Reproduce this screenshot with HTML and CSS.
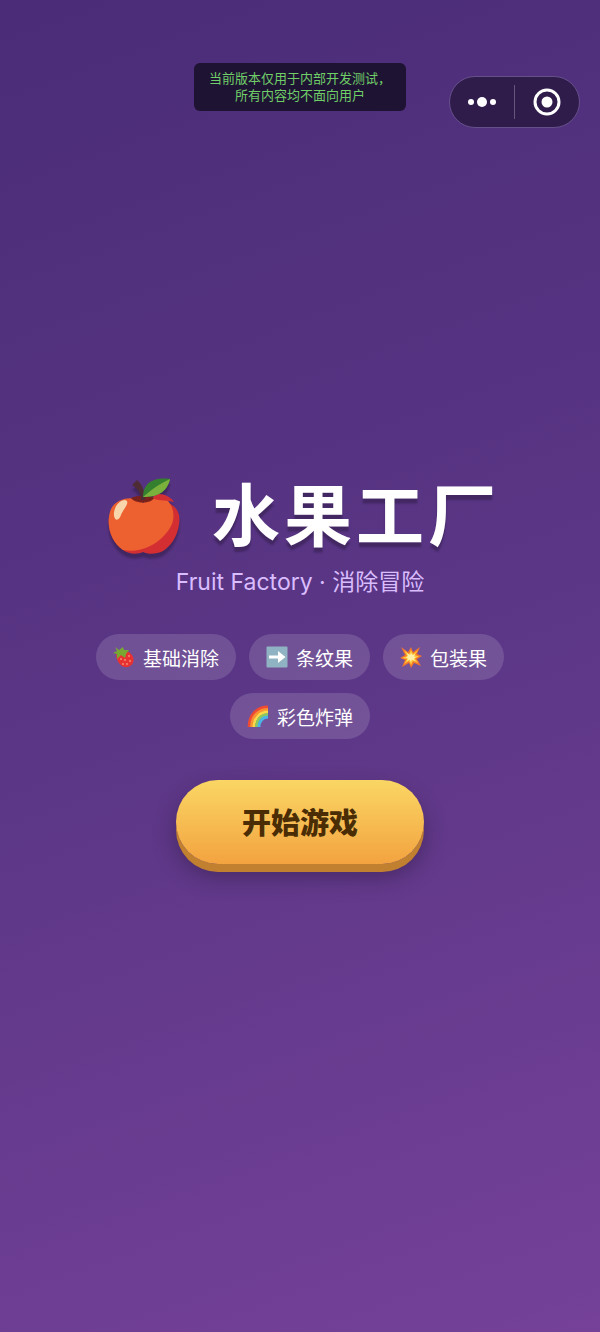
FILE: index.html
```html
<!DOCTYPE html>
<html lang="zh-CN">
	<head>
		<meta charset="utf-8">
		<meta name="viewport" content="width=device-width, initial-scale=1">
		<title>水果工厂</title>
		<link rel="stylesheet" href="styles.css">
	</head>
	<body>
		<!-- 测试版本提示 -->
		<div class="notice">当前版本仅用于内部开发测试，<br>所有内容均不面向用户</div>
		<!-- 右上角胶囊按钮 -->
		<div class="capsule">
			<button type="button" class="capsule-btn" aria-label="更多">
				<svg width="28" height="12" viewBox="0 0 28 12" fill="#fff">
					<circle cx="3" cy="6" r="3"/>
					<circle cx="14" cy="6" r="5"/>
					<circle cx="25" cy="6" r="3"/>
				</svg>
			</button>
			<span class="capsule-line"></span>
			<button type="button" class="capsule-btn" aria-label="关闭">
				<svg width="28" height="28" viewBox="0 0 28 28">
					<circle cx="14" cy="14" r="12" fill="none" stroke="#fff" stroke-width="3"/>
					<circle cx="14" cy="14" r="5.5" fill="#fff"/>
				</svg>
			</button>
		</div>
		<main class="home">
			<h1 class="home-title">
				<svg class="apple" width="72" height="78" viewBox="0 0 72 78">
					<path d="M35 29C29 20 10 20 3 33C-3 46 3 64 15 72C22 77 30 76 35 74C41 77 49 76 55 73C67 66 73 49 71 37C68 23 48 18 35 29Z" fill="#d32f32"/>
					<path d="M35 25C29 18 10 18 3 31C-3 46 3 64 15 72C33 76 54 65 63 48C68 38 65 27 58 21C49 16 41 20 35 25Z" fill="#ed6130"/>
					<path d="M45 17C53 14 62 18 66 24C60 22 52 23 46 21Z" fill="#d32f32"/>
					<path d="M23 20C29 17 42 17 46 20C43 26 27 26 23 20Z" fill="#7b211b"/>
					<path d="M24 7L29 2C34 6 37 13 37 22L33 22C33 15 30 11 24 7Z" fill="#4e2c35"/>
					<path d="M35 19C35 4 47-1 62 1C59 15 48 19 35 19Z" fill="#34802f"/>
					<path d="M35 19C43 12 51 6 62 1C59 15 48 19 35 19Z" fill="#79b13c"/>
					<path d="M6 38C5 30 11 22 17 22C23 24 16 30 13 37C11 43 7 43 6 38Z" fill="#f9d5ac"/>
				</svg>
				<span>水果工厂</span>
			</h1>
			<p class="home-sub">Fruit Factory · 消除冒险</p>
			<ul class="tags">
				<li class="tag">
					<svg width="22" height="22" viewBox="0 0 22 22">
						<path d="M3 9C6 5 14 3 18 8C23 13 20 20 15 21C10 22 4 18 3 9Z" fill="#e83232"/>
						<path d="M2 1L6 4L10 1L11 4L16 4L13 8L12 12L8 9L4 13L4 8L0 7L4 5Z" fill="#77a832"/>
						<g fill="#ffc19b">
							<circle cx="8" cy="13" r="0.8"/>
							<circle cx="12" cy="14" r="0.8"/>
							<circle cx="16" cy="10" r="0.8"/>
							<circle cx="17" cy="15" r="0.8"/>
							<circle cx="10" cy="18" r="0.8"/>
							<circle cx="14" cy="18" r="0.8"/>
						</g>
					</svg>
					基础消除
				</li>
				<li class="tag">
					<svg width="22" height="22" viewBox="0 0 22 22">
						<rect x="0.5" y="0.5" width="21" height="21" rx="1" fill="#8fb3c2"/>
						<path d="M3 9.5H12V5L19.5 11L12 17V12.5H3Z" fill="#fff"/>
					</svg>
					条纹果
				</li>
				<li class="tag">
					<svg width="22" height="22" viewBox="0 0 22 22">
						<path d="M1 1L8 6L11 1L13 6L20 1L17 8L22 10L17 13L21 20L14 17L11 22L9 17L2 21L5 14L0 12L5 9Z" fill="#f2772b"/>
						<path d="M4 4L9 8L11 4L13 8L18 4L15 9L19 10.5L15 12.5L18 17L13 15L11 19L9 15L4 18L7 13L2 12L7 10Z" fill="#fdc93a"/>
						<path d="M7 7L10 9L11 7L12.5 9L15 8L14 10.5L16 11L14 12.5L15 15L12 13.5L11 16L9.5 13.5L7 15L8 12.5L6 11.5L8 10Z" fill="#fff0a8"/>
					</svg>
					包装果
				</li>
				<li class="tag">
					<svg width="22" height="22" viewBox="0 0 22 22" fill="none" stroke-width="2.8">
						<path d="M2 22C2 10 10 2 21 2" stroke="#ee4b32"/>
						<path d="M4.5 22C4.5 11.5 11.5 4.5 21 4.5" stroke="#fb9330"/>
						<path d="M7 22C7 13 13 7 21 7" stroke="#fdd94a"/>
						<path d="M9.5 22C9.5 14.5 14.5 9.5 21 9.5" stroke="#8bc861"/>
						<path d="M12 22C12 16 16 12 21 12" stroke="#4cb5e8"/>
					</svg>
					彩色炸弹
				</li>
			</ul>
			<button type="button" class="start-btn">开始游戏</button>
		</main>
	</body>
</html>
```

FILE: styles.css
```css
* {
	box-sizing: border-box;
	margin: 0;
	padding: 0;
}
body {
	min-height: 100vh;
	font-family: "Noto Sans CJK SC", sans-serif;
	color: #fff;
	background: linear-gradient(160deg, #4a2c78 0%, #5b3686 50%, #754199 100%);
}
button {
	border: none;
	font-family: inherit;
	cursor: pointer;
}
.notice {
	position: fixed;
	top: 63px;
	left: 50%;
	transform: translateX(-50%);
	padding: 6px 15px 8px;
	border-radius: 6px;
	background-color: #1f1333;
	color: #6fce68;
	font-size: 13px;
	line-height: 17px;
	text-align: center;
	white-space: nowrap;
}
.capsule {
	position: fixed;
	top: 76px;
	right: 20px;
	display: flex;
	align-items: center;
	width: 131px;
	height: 52px;
	border: 1px solid #66508a;
	border-radius: 26px;
	background-color: #2f1c4b;
}
.capsule-btn {
	flex: 1;
	display: flex;
	align-items: center;
	justify-content: center;
	height: 100%;
	background: none;
}
.capsule-line {
	width: 1px;
	height: 34px;
	background-color: #66567c;
}
.home {
	display: flex;
	flex-direction: column;
	align-items: center;
	justify-content: center;
	min-height: 100vh;
	padding: 0 32px;
}
.home-title {
	display: flex;
	align-items: center;
	gap: 32px;
	padding-left: 8px;
	font-size: 68px;
	line-height: 88px;
	font-weight: 700;
	letter-spacing: 4px;
	text-shadow: 0 5px 2px rgba(0,0,0,.25);
}
.apple {
	margin-top: 10px;
	filter: drop-shadow(0 5px 1px rgba(0,0,0,.25));
}
.home-sub {
	margin-top: 10px;
	font-family: Inter, "Noto Sans CJK SC", sans-serif;
	font-size: 23px;
	line-height: 32px;
	color: #d9bdff;
}
.tags {
	display: flex;
	flex-wrap: wrap;
	justify-content: center;
	gap: 13px;
	margin-top: 36px;
	list-style: none;
}
.tag {
	display: flex;
	align-items: center;
	gap: 8px;
	height: 46px;
	padding: 0 17px;
	border-radius: 23px;
	background-color: rgba(255,255,255,.14);
	font-size: 19px;
}
.start-btn {
	height: 84px;
	margin-top: 41px;
	padding: 0 66px 2px;
	border-radius: 42px;
	background: linear-gradient(180deg, #fad664, #f3a340);
	box-shadow: 0 8px 0 #c1802f, 0 12px 24px rgba(0,0,0,.3);
	color: #4a2c05;
	font-size: 29px;
	font-weight: 900;
}
```
